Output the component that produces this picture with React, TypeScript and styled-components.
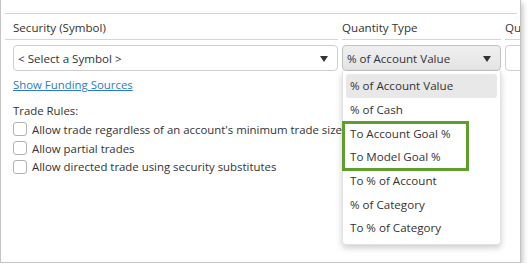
import React from "react";
import styled, { createGlobalStyle } from "styled-components";

const Global = createGlobalStyle`
  html, body { margin: 0; padding: 0; background: #ffffff; }
  body { font-family: "Open Sans", "Noto Sans", sans-serif; font-size: 11.4px; color: #333333; }
`;

const Panel = styled.div`
  position: relative;
  width: 521px;
  height: 263px;
  border: 1px solid #c4c4c4;
  border-top: none;
  box-shadow: 2px 3px 5px rgba(0, 0, 0, 0.22);
  background: #fff;
  padding: 13px 3px 0 4px;
  box-sizing: border-box;
  overflow: hidden;
`;

const Grid = styled.div`
  display: grid;
  grid-template-columns: 325px 159px 40px;
  column-gap: 4px;
  padding-left: 8px;
  border-top: 1px solid #d6d6d6;
`;

const HeaderCell = styled.div<{ $first?: boolean }>`
  height: 26px;
  display: flex;
  align-items: center;
  padding-top: 2px;
  box-sizing: border-box;
  white-space: nowrap;
  border-bottom: 1px solid #d6d6d6;
  margin-left: ${(p) => (p.$first ? "-8px" : "0")};
  padding-left: ${(p) => (p.$first ? "8px" : "0")};
  font-size: 11.6px;
  color: #333;
`;

const Cell = styled.div`
  position: relative;
  padding-top: 5px;
`;

const SelectBox = styled.div<{ $active?: boolean }>`
  height: 26px;
  box-sizing: border-box;
  border: 1px solid ${(p) => (p.$active ? "#c2c2c2" : "#cfcfcf")};
  border-radius: 4px;
  background: ${(p) => (p.$active ? "linear-gradient(#f0f0f0, #e4e4e4)" : "#fff")};
  display: flex;
  align-items: center;
  padding: 0 9px 0 4px;
  font-size: 11.6px;
  color: #333;
  white-space: nowrap;
`;

const SelectText = styled.span`
  flex: 1;
`;

const Caret = styled.span`
  width: 0;
  height: 0;
  border-left: 4px solid transparent;
  border-right: 4px solid transparent;
  border-top: 6px solid #333;
  margin-top: 1px;
`;

const LeftStack = styled.div`
  display: flex;
  flex-direction: column;
`;

const Link = styled.a`
  color: #2b7bc4;
  text-decoration: underline;
  font-size: 11.4px;
  margin-top: 6px;
  line-height: 16px;
  cursor: pointer;
  align-self: flex-start;
`;

const Label = styled.div`
  margin-top: 10px;
  margin-bottom: 1px;
  line-height: 16px;
  font-size: 11.4px;
`;

const CheckRow = styled.label`
  display: flex;
  align-items: center;
  gap: 5px;
  height: 18.7px;
  white-space: nowrap;
  font-size: 11.4px;
`;

const Box = styled.span`
  width: 14px;
  height: 14px;
  box-sizing: border-box;
  border: 1px solid #b3b3b3;
  border-radius: 3px;
  background: #fff;
  flex: none;
`;

const Menu = styled.div`
  position: absolute;
  top: 31px;
  left: 0;
  width: 159px;
  box-sizing: border-box;
  padding: 3px 3px 4px;
  background: #fff;
  border: 1px solid #e2e2e2;
  border-top: none;
  border-radius: 0 0 4px 4px;
  box-shadow: 0 3px 6px rgba(0, 0, 0, 0.2);
  z-index: 2;
`;

const Item = styled.div<{ $hover?: boolean }>`
  height: 23.7px;
  display: flex;
  align-items: center;
  padding-left: 4px;
  border-radius: 3px;
  background: ${(p) => (p.$hover ? "#e8e8e8" : "transparent")};
  font-size: 11.6px;
  color: #333;
  white-space: nowrap;
`;

const Highlight = styled.div`
  position: absolute;
  left: -1px;
  top: 50px;
  width: 127px;
  height: 50px;
  box-sizing: border-box;
  border: 3px solid #5f9e2a;
  pointer-events: none;
`;

const items = [
  "% of Account Value",
  "% of Cash",
  "To Account Goal %",
  "To Model Goal %",
  "To % of Account",
  "% of Category",
  "To % of Category",
];

const rules = [
  "Allow trade regardless of an account's minimum trade size",
  "Allow partial trades",
  "Allow directed trade using security substitutes",
];

export default function App() {
  return (
    <>
      <Global />
      <Panel>
        <Grid>
          <HeaderCell $first>Security (Symbol)</HeaderCell>
          <HeaderCell>Quantity Type</HeaderCell>
          <HeaderCell>Qu</HeaderCell>
          <Cell>
            <LeftStack>
              <SelectBox>
                <SelectText>&lt; Select a Symbol &gt;</SelectText>
                <Caret />
              </SelectBox>
              <Link>Show Funding Sources</Link>
              <Label>Trade Rules:</Label>
              {rules.map((r) => (
                <CheckRow key={r}>
                  <Box />
                  {r}
                </CheckRow>
              ))}
            </LeftStack>
          </Cell>
          <Cell>
            <SelectBox $active>
              <SelectText>% of Account Value</SelectText>
              <Caret />
            </SelectBox>
            <Menu>
              {items.map((t, i) => (
                <Item key={t} $hover={i === 0}>
                  {t}
                </Item>
              ))}
              <Highlight />
            </Menu>
          </Cell>
          <Cell>
            <SelectBox />
          </Cell>
        </Grid>
      </Panel>
    </>
  );
}
